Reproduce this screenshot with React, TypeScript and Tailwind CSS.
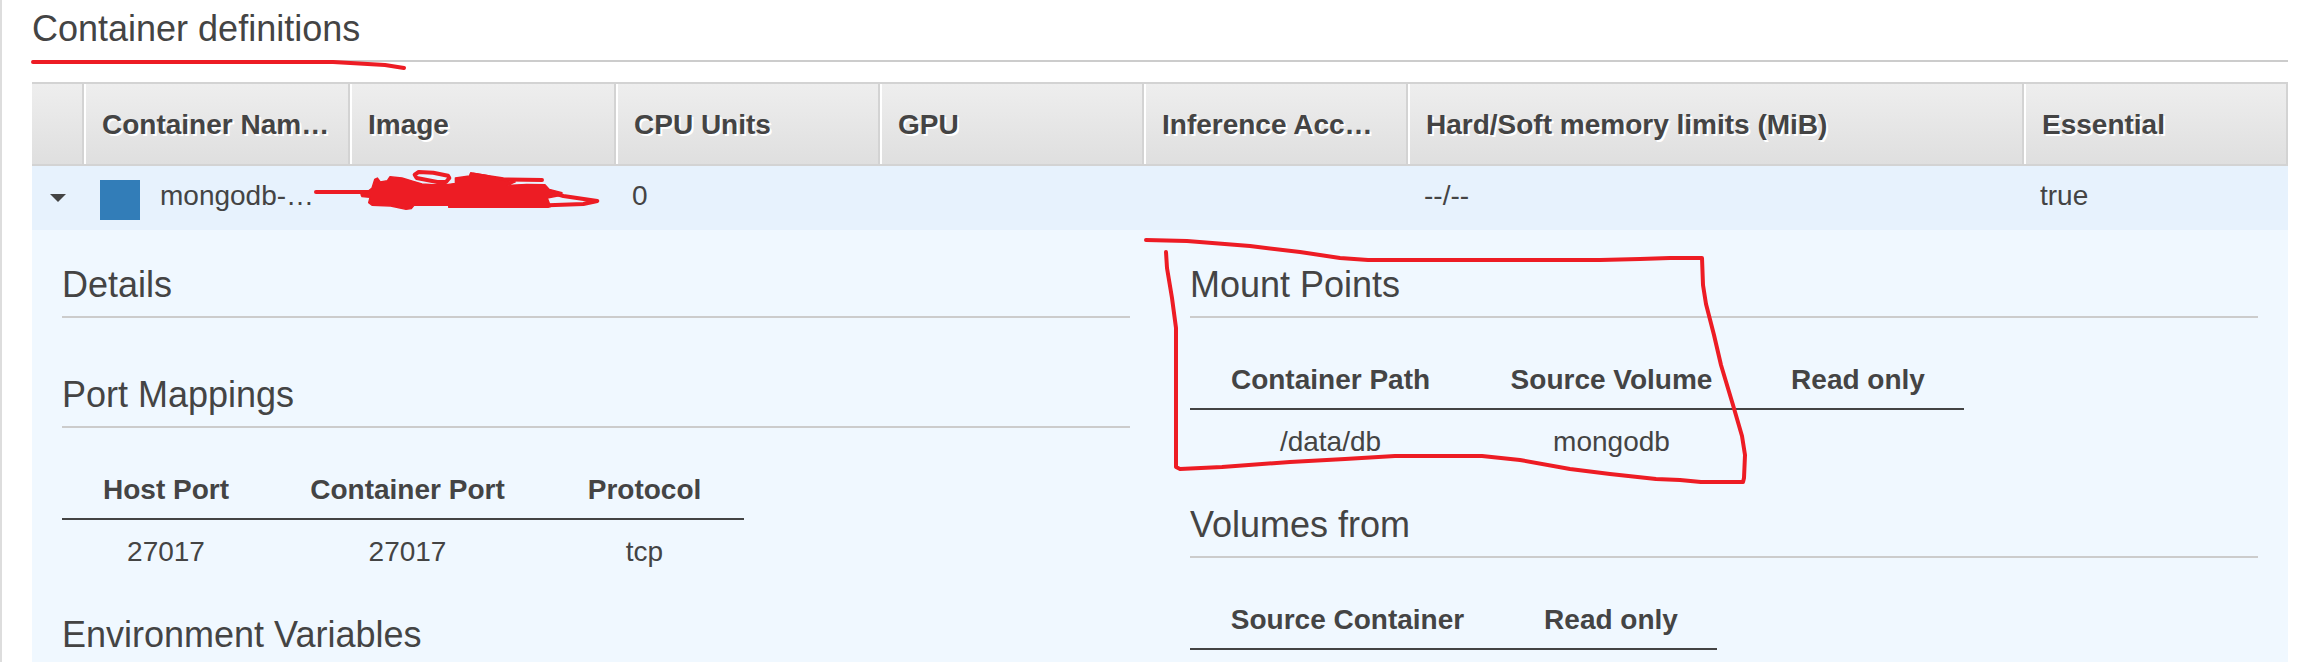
import type { ReactNode } from "react";

function Section({ title, children }: { title: string; children?: ReactNode }) {
  return (
    <section>
      <h3 className="border-b-2 border-[#cccccc] pb-1.5 text-[36px] leading-[50px]">{title}</h3>
      <div className="pt-5">{children}</div>
    </section>
  );
}

function DataTable({ columns, rows }: { columns: { label: string; width: string }[]; rows: string[][] }) {
  return (
    <table className="border-collapse text-center text-[28px] leading-10">
      <thead>
        <tr className="border-b-2 border-[#444444]">
          {columns.map((c) => (
            <th key={c.label} scope="col" className={`${c.width} whitespace-nowrap pt-[22px] pb-2 font-bold`}>
              {c.label}
            </th>
          ))}
        </tr>
      </thead>
      <tbody>
        {rows.map((r, i) => (
          <tr key={i}>
            {r.map((v, j) => (
              <td key={j} className="pt-3 pb-1.5">
                {v}
              </td>
            ))}
          </tr>
        ))}
      </tbody>
    </table>
  );
}

const headers = [
  { label: "Container Nam…", width: "w-[266px]" },
  { label: "Image", width: "w-[266px]" },
  { label: "CPU Units", width: "w-[264px]" },
  { label: "GPU", width: "w-[264px]" },
  { label: "Inference Acc…", width: "w-[264px]" },
  { label: "Hard/Soft memory limits (MiB)", width: "" },
  { label: "Essential", width: "w-[264px]" },
];

function Annotations() {
  return (
    <svg
      className="pointer-events-none absolute top-0 -left-0.5"
      width="2306"
      height="662"
      fill="none"
      stroke="#ed1c24"
      strokeWidth="4"
      strokeLinecap="round"
      strokeLinejoin="round"
      aria-hidden="true"
    >
      <path d="M33 62H333L385 65L404 68" />
      <path d="M1146 240L1187 241L1250 246L1300 252L1340 258L1368 260H1600L1640 259L1670 258H1702L1703 285L1706 304L1714 335L1721 365L1733 405L1742 436L1745 455L1744 478L1743 482H1701L1680 480L1656 479L1610 474L1570 469L1520 460L1482 456H1395L1345 459L1290 462L1222 467L1180 469L1176 467V328L1172 298L1167 268L1166 252" />
      <g transform="translate(300 160) scale(0.33333)" strokeWidth="12">
        <path d="M48 96H220" />
        <path d="M350 54L344 44L356 36L400 38L444 47L448 54L438 66L412 66L350 54Z" />
        <path d="M520 44L610 58L726 60" />
        <path d="M735 92L790 108L892 123L850 132L745 136" />
        <path
          strokeWidth="4"
          fill="#ed1c24"
          d="M183 104L205 93L216 84L224 58L232 54L241 66L262 62L270 50L306 54L340 64L366 72L400 74L440 74L466 70L466 54L508 48L512 38L560 46L606 60L646 66L622 76L680 73L735 74L748 88L786 98L784 106L742 114L752 140L744 142H446V136H342L334 146L318 148L272 138L216 136L206 128L210 112L186 110Z"
        />
      </g>
    </svg>
  );
}

export default function App() {
  return (
    <main className="relative h-screen overflow-hidden border-l-2 border-[#dddddd] bg-white pt-1 pr-[18px] pl-[30px] font-['Liberation_Sans',Arial,sans-serif] text-[#444444]">
      <h2 className="mb-5 border-b-2 border-[#cccccc] pb-1.5 text-[36px] leading-[50px]">Container definitions</h2>

      <table className="w-full table-fixed border-separate border-spacing-0 text-left text-[28px] leading-10">
        <thead>
          <tr>
            <th className="h-[84px] w-[52px] border-y-2 border-r-2 border-[#d3d3d3] bg-linear-to-b from-[#eeeeee] to-[#dfdfdf]" />
            {headers.map((h) => (
              <th
                key={h.label}
                scope="col"
                className={`${h.width} h-[84px] border-y-2 border-r-2 border-[#d3d3d3] bg-linear-to-b from-[#eeeeee] to-[#dfdfdf] pt-0.5 pr-0 pb-0 pl-[18px] font-bold whitespace-nowrap shadow-[inset_2px_0_0_#ffffff] [text-shadow:2px_2px_0_#ffffff]`}
              >
                {h.label}
              </th>
            ))}
          </tr>
        </thead>
        <tbody>
          <tr className="bg-[#e7f2fd]">
            <td className="h-16 p-0">
              <button type="button" aria-label="Collapse row" aria-expanded="true" className="flex h-10 w-full items-center pl-[18px]">
                <svg width="16" height="8" viewBox="0 0 16 8" fill="#444444">
                  <path d="M0 0H16L8 8Z" />
                </svg>
              </button>
            </td>
            <td className="px-4 py-0">
              <div className="flex items-start gap-5">
                <div className="shrink-0 pt-1">
                  <div className="size-10 bg-[#327db8]" />
                </div>
                <span className="whitespace-nowrap">mongodb-…</span>
              </div>
            </td>
            <td className="px-4 pt-0 pb-1" />
            <td className="px-4 pt-0 pb-1">0</td>
            <td className="px-4 pt-0 pb-1" />
            <td className="px-4 pt-0 pb-1" />
            <td className="px-4 pt-0 pb-1">--/--</td>
            <td className="px-4 pt-0 pb-1">true</td>
          </tr>
          <tr className="bg-[#f0f8ff]">
            <td colSpan={8} className="px-[30px] pt-[30px] pb-8 align-top">
              <div className="grid grid-cols-2 gap-[60px]">
                <div className="flex flex-col gap-8">
                  <Section title="Details" />
                  <Section title="Port Mappings">
                    <DataTable
                      columns={[
                        { label: "Host Port", width: "w-[208px]" },
                        { label: "Container Port", width: "w-[275px]" },
                        { label: "Protocol", width: "w-[199px]" },
                      ]}
                      rows={[["27017", "27017", "tcp"]]}
                    />
                  </Section>
                  <Section title="Environment Variables" />
                </div>
                <div className="flex flex-col gap-8">
                  <Section title="Mount Points">
                    <DataTable
                      columns={[
                        { label: "Container Path", width: "w-[281px]" },
                        { label: "Source Volume", width: "w-[281px]" },
                        { label: "Read only", width: "w-[212px]" },
                      ]}
                      rows={[["/data/db", "mongodb", ""]]}
                    />
                  </Section>
                  <Section title="Volumes from">
                    <DataTable
                      columns={[
                        { label: "Source Container", width: "w-[315px]" },
                        { label: "Read only", width: "w-[212px]" },
                      ]}
                      rows={[]}
                    />
                  </Section>
                </div>
              </div>
            </td>
          </tr>
        </tbody>
      </table>

      <Annotations />
    </main>
  );
}
